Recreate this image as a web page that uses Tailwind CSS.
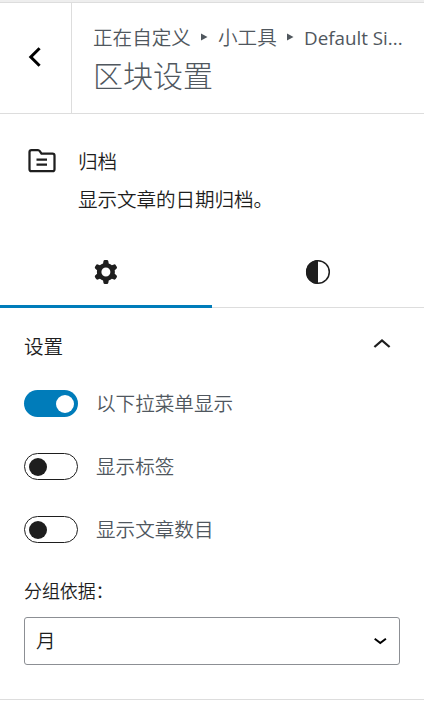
<!DOCTYPE html>
<html lang="zh-CN">
<head>
<meta charset="utf-8">
<title>区块设置</title>
<script src="https://cdn.jsdelivr.net/npm/@tailwindcss/browser@4"></script>
</head>
<body class="w-[424px] h-[701px] overflow-hidden bg-white font-['Noto_Sans','Noto_Sans_CJK_SC',sans-serif] font-[350] text-[19.6px] text-[#1e1e1e]">
<div class="h-[3px] bg-[#eeeeee] border-b border-[#dddddd]"></div>
<header class="flex h-[111px] border-b border-[#dddddd] text-[#50575e]">
  <button class="w-[72px] shrink-0 border-r border-[#dddddd]" aria-label="返回">
    <svg class="block w-[71px] h-[110px]" viewBox="0 0 71 110" fill="none" stroke="#000" stroke-width="3"><path d="M39.6 45.2L30.8 54l8.8 8.8"/></svg>
  </button>
  <div class="pl-[21px] pt-[21px] whitespace-nowrap">
    <div class="flex items-center h-[28px] leading-[28px]">
      <span class="w-[98px]">正在自定义</span>
      <svg class="w-[8px] h-[8px] ml-[9px] mr-[10px] -mt-[2px]" viewBox="0 0 8 8" fill="#50575e"><path d="M1 .5L7.500 4 1 7.500z"/></svg>
      <span class="w-[59px]">小工具</span>
      <svg class="w-[8px] h-[8px] ml-[9px] mr-[10px] -mt-[2px]" viewBox="0 0 8 8" fill="#50575e"><path d="M1 .5L7.500 4 1 7.500z"/></svg>
      <span class="font-['Open_Sans','Noto_Sans',sans-serif] font-normal text-[18.8px]">Default Si...</span>
    </div>
    <h1 class="text-[30px] leading-[48px] font-light">区块设置</h1>
  </div>
</header>
<section class="flex h-[122px] pt-[28px] pl-[24px]">
  <svg class="w-[36px] h-[36px] shrink-0" viewBox="0 0 36 36" fill="none" stroke="#1e1e1e" stroke-width="2.250"><path d="M7.500 8H14Q15 8 15.600 9L17.500 11.700H28.500Q30.500 11.700 30.500 13.700V27.200Q30.500 29.200 28.500 29.200H7.500Q5.500 29.200 5.500 27.200V10Q5.500 8 7.500 8zM12.500 17.500h10.500M12.500 22.500h10.500"/></svg>
  <div class="pl-[18px] pt-[6px]">
    <h2 class="leading-[28px]">归档</h2>
    <p class="leading-[28px] pt-[10px] tracking-[-0.1px]">显示文章的日期归档。</p>
  </div>
</section>
<nav class="flex h-[72px]">
  <button class="flex flex-1 justify-center pt-[18px] border-b-3 border-[#007cba]" aria-label="设置">
    <svg class="w-[36px] h-[36px]" viewBox="0 0 24 24" fill="#1e1e1e" fill-rule="evenodd"><path d="M10.289 4.836A1 1 0 0111.275 4h1.306a1 1 0 01.987.836l.244 1.466c.787.26 1.503.679 2.108 1.218l1.393-.522a1 1 0 011.216.437l.653 1.13a1 1 0 01-.23 1.273l-1.148.944a6.025 6.025 0 010 2.435l1.149.946a1 1 0 01.23 1.272l-.653 1.13a1 1 0 01-1.216.437l-1.394-.522c-.605.54-1.32.958-2.108 1.218l-.244 1.466a1 1 0 01-.987.836h-1.306a1 1 0 01-.986-.836l-.244-1.466a5.995 5.995 0 01-2.108-1.218l-1.394.522a1 1 0 01-1.217-.436l-.653-1.131a1 1 0 01.23-1.272l1.149-.946a6.026 6.026 0 010-2.435l-1.148-.944a1 1 0 01-.23-1.272l.653-1.131a1 1 0 011.217-.437l1.393.522a5.994 5.994 0 012.108-1.218l.244-1.466zM14.929 12a3 3 0 11-6 0 3 3 0 016 0z"/></svg>
  </button>
  <button class="flex flex-1 justify-center pt-[18px] border-b border-[#dddddd]" aria-label="样式">
    <svg class="w-[36px] h-[36px]" viewBox="0 0 36 36"><circle cx="18" cy="18" r="11.300" fill="none" stroke="#1e1e1e" stroke-width="1.500"/><path d="M18 6a12 12 0 000 24z" fill="#1e1e1e"/></svg>
  </button>
</nav>
<main class="h-[392px] px-[24px] border-b border-[#dddddd]">
  <div class="flex justify-between h-[82px] pt-[24px]">
    <h2 class="leading-[28px] pt-[1px]">设置</h2>
    <svg class="w-[36px] h-[24px]" viewBox="0 0 36 24" fill="none" stroke="#1e1e1e" stroke-width="2.300"><path d="M10.400 15L18 8.400l7.600 6.600"/></svg>
  </div>
  <div class="flex flex-col gap-[36px] text-[#50575e]">
    <label class="flex items-center h-[27px]"><span class="flex items-center justify-end w-[54px] h-[27px] pr-[4px] rounded-full bg-[#007cba] mr-[18px]"><i class="w-[18px] h-[18px] rounded-full bg-white"></i></span><span>以下拉菜单显示</span></label>
    <label class="flex items-center h-[27px]"><span class="flex items-center w-[54px] h-[27px] pl-[4px] rounded-full border border-[#1e1e1e] mr-[18px]"><i class="w-[18px] h-[18px] rounded-full bg-[#1e1e1e]"></i></span><span>显示标签</span></label>
    <label class="flex items-center h-[27px]"><span class="flex items-center w-[54px] h-[27px] pl-[4px] rounded-full border border-[#1e1e1e] mr-[18px]"><i class="w-[18px] h-[18px] rounded-full bg-[#1e1e1e]"></i></span><span>显示文章数目</span></label>
  </div>
  <div class="pt-[36px] text-[18px] leading-[24px] tracking-[-0.1px]">分组依据：</div>
  <div class="flex items-center justify-between mt-[14px] h-[48px] border border-[#8c8f94] rounded-[3px] pl-[11px] pr-[11px]">
    <span>月</span>
    <svg class="w-[15px] h-[12px]" viewBox="0 0 15 12" fill="none" stroke="#000" stroke-width="2"><path d="M1.700 3.800l5.600 4.300 5.600-4.300"/></svg>
  </div>
</main>
</body>
</html>
